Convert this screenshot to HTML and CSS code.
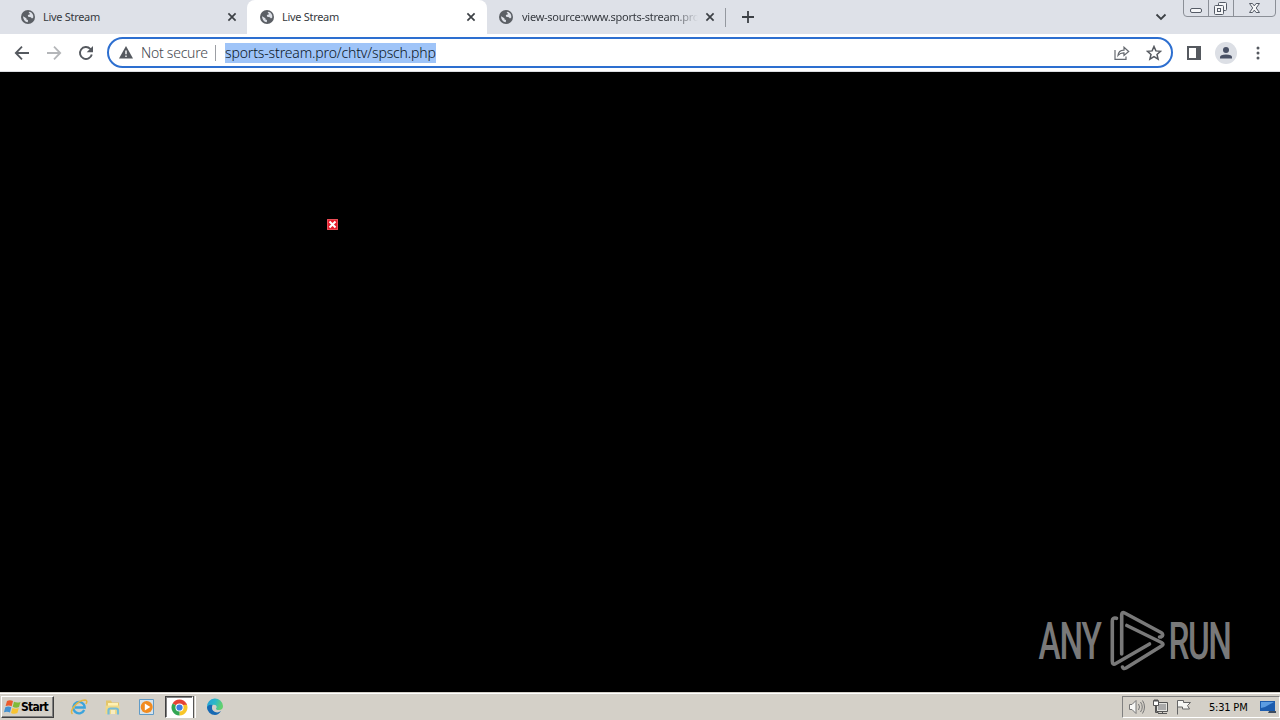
FILE: index.html
```html
<!DOCTYPE html>
<html lang="en">
<head>
<meta charset="utf-8">
<title>Live Stream</title>
<link rel="stylesheet" href="styles.css">
</head>
<body>
<svg class="defs" width="0" height="0">
  <symbol id="globe" viewBox="0 0 14 14"><circle cx="7" cy="7" r="7" fill="#5b5f65"/><path d="M2.100 6.200 5.400 8.300 5.500 9.600 7 10.100 6.800 12.200A5.500 5.500 0 0 1 2.100 6.200ZM8.500 1.800A5.500 5.500 0 0 1 12.300 7.600L11 8.500 9.800 7.200 7.200 6.700 6.800 5 8.700 4.400 8.800 3.300 7.600 3Z" fill="#dee1e8"/></symbol>
  <symbol id="close" viewBox="0 0 10 10"><path d="m1.400 1.400 7.200 7.200m0-7.200L1.400 8.600" stroke="#3c4045" stroke-width="1.700"/></symbol>
</svg>
<header class="tabs">
  <div class="tab"><svg class="globe"><use href="#globe"/></svg><span class="title">Live Stream</span><svg class="close"><use href="#close"/></svg></div>
  <div class="tab active"><svg class="globe"><use href="#globe"/></svg><span class="title">Live Stream</span><svg class="close"><use href="#close"/></svg></div>
  <div class="tab last"><svg class="globe"><use href="#globe"/></svg><span class="title long">view-source:www.sports-stream.pro</span><svg class="close"><use href="#close"/></svg></div>
  <i class="tab-sep"></i>
  <svg class="plus" viewBox="0 0 12 12"><path d="M6 0v12M0 6h12" stroke="#3c4045" stroke-width="1.800"/></svg>
  <svg class="chevron" viewBox="0 0 12 8"><path d="m1.500 1.500 4.500 4.500 4.500-4.500" fill="none" stroke="#3c4045" stroke-width="1.800"/></svg>
  <svg class="winbtns" viewBox="0 0 94 18"><path d="M.5 0v13q0 3.500 3.500 3.500h85q3.500 0 3.500-3.500V0M25.500 0v16M50.500 0v16" fill="none" stroke="#8b8f97"/><g fill="#f5f6f8" stroke="#555b66"><rect x="7.500" y="8.500" width="11" height="4" rx="1.500"/><rect x="35.500" y="2.500" width="8" height="8" rx="1"/><rect x="31.500" y="5.500" width="9" height="9" rx="1"/><rect x="34.500" y="8.500" width="3" height="3"/><path d="M66.500 3.500h3l1.800 2.400 1.800-2.400h3.400l-3.300 4.500 3.300 4.500h-3.400l-1.800-2.400-1.800 2.400h-3l3.200-4.500Z"/></g></svg>
</header>
<nav class="toolbar">
  <svg class="nav back" viewBox="0 0 16 16"><path d="M15 8H2M8 1.700 1.800 8 8 14.300" fill="none" stroke="#55595f" stroke-width="1.800"/></svg>
  <svg class="nav fwd" viewBox="0 0 16 16"><path d="M1 8h13M8 1.700 14.200 8 8 14.300" fill="none" stroke="#b4b6b9" stroke-width="1.800"/></svg>
  <svg class="nav reload" viewBox="0 0 16 16"><path d="M13.800 9.500A6 6 0 1 1 12.300 3.800L14 5.500" fill="none" stroke="#55595f" stroke-width="1.900"/><path d="M15 1v6.300H8.700Z" fill="#55595f"/></svg>
  <div class="omnibox">
    <svg class="warn" viewBox="0 0 14 13"><path d="M7 0 14 12.500H0Z" fill="#55595f"/><path d="M7 4.500v3.700M7 9.400v1.500" stroke="#fff" stroke-width="1.400"/></svg>
    <span class="secure">Not secure</span><i class="omni-sep"></i><span class="url">sports-stream.pro/chtv/spsch.php</span>
    <svg class="share" viewBox="0 0 16 14"><path d="M1 4v9.300h11V10.500M4 9.500C4.300 6 6.500 4.200 10 4.100V1.200L14.700 5.500 10 9.500V6.900C7.300 6.800 5.500 7.600 4 9.500Z" fill="none" stroke="#65696f" stroke-width="1.200"/></svg>
    <svg class="star" viewBox="0 0 16 16"><path d="m8 1.500 1.900 4.400 4.700.4L11 9.500l1.100 4.700L8 11.700l-4.100 2.500L5 9.500 1.400 6.300l4.700-.4Z" fill="none" stroke="#55595f" stroke-width="1.500"/></svg>
  </div>
  <svg class="panel" viewBox="0 0 14 14"><path d="M0 0h14v14H0ZM2 2v10h7V2Z" fill="#55595f" fill-rule="evenodd"/></svg>
  <svg class="avatar" viewBox="0 0 22 22"><circle cx="11" cy="11" r="11" fill="#dcdfe5"/><circle cx="11" cy="8" r="3" fill="#485064"/><path d="M5 16.500v-1.300Q5 12.500 11 12.400q6 .1 6 2.800v1.300Z" fill="#485064"/></svg>
  <svg class="dots" viewBox="0 0 4 14"><g fill="#55595f"><circle cx="2" cy="2" r="1.500"/><circle cx="2" cy="7" r="1.500"/><circle cx="2" cy="12" r="1.500"/></g></svg>
</nav>
<main class="page">
  <svg class="broken" viewBox="0 0 11 11"><path d="M0 0h11v11H0Z" fill="#e51c2b"/><path d="M.5.500h10v10H.5Z" fill="none" stroke="#f29a9c" stroke-opacity=".4"/><path d="m2.500 2.500 6 6m0-6-6 6" stroke="#fff" stroke-width="2"/></svg>
  <svg class="brand" viewBox="0 0 200 70">
    <g class="brand-text"><text transform="translate(7.500 54) scale(.64 1)" textLength="99" lengthAdjust="spacing">ANY</text><text transform="translate(137.500 54) scale(.64 1)" textLength="99" lengthAdjust="spacing">RUN</text></g>
    <g fill="none" stroke="#797979" stroke-width="3.600" stroke-linejoin="round" stroke-linecap="round"><path d="M90.700 49V10q0-3.500 3-2L130 27.500q3.500 2.500 0 4.500h-1.500"/><path d="M85.500 13.300q-4.200-1-4.200 2.700v40q0 4.500 3.500 2.500L118.500 39"/><path d="M95.800 20.500 130.500 37.500q3 1.700 0 3.500L95 63q-2.700 1.500-3.500-1"/></g>
  </svg>
</main>
<footer class="taskbar">
  <button class="start"><svg viewBox="0 0 17 16"><path d="M3 2q3-1.600 6 .1L7.700 7.300Q5 5.800 1.600 7.100Z" fill="#ec5b2c"/><path d="M10 2.700q3 1.500 6.500.2L15 8q-3 1.400-6.300-.2Z" fill="#80ba38"/><path d="M1.300 8.200q3.200-1.200 6 .1L6 13.500Q3.200 12-.1 13.300Z" fill="#4592d1"/><path d="M8.400 8.900q3 1.500 6.400.2l-1.400 5q-3.200 1.400-6.400-.2Z" fill="#f8c331"/></svg><span>Start</span></button>
  <svg class="ql ie" viewBox="0 0 18 18"><path d="M14.200 12A5.700 5.700 0 1 1 14.700 9.500H5" fill="none" stroke="#3ba4dc" stroke-width="2.300"/><path d="M2.500 16C-1 13 7 2.500 15 2q3 .5 1 4" fill="none" stroke="#e4b744" stroke-width="1.500"/></svg>
  <svg class="ql folder" viewBox="0 0 18 18"><path d="M2 2.500h5l1 2h7v11H2Z" fill="#e4c66a"/><path d="M4 5h10v4H4Z" fill="#fff1b2"/><path d="M1.500 7.500h14V16h-14Z" fill="#efd988"/><path d="M4.500 16.500v-4q0-2 2-2h5.500q2 0 2 2v4" fill="none" stroke="#74bcd9" stroke-width="2.200"/><path d="M7 12h4v4H7Z" fill="#f7ecc0"/></svg>
  <svg class="ql media" viewBox="0 0 18 18"><path d="M1.500 1.500h14v15h-14Z" fill="#d6e3ec" stroke="#609bc7"/><circle cx="8.700" cy="9" r="6" fill="#f18b20"/><path d="m6.800 5.500 5.500 3.500-5.500 3.500Z" fill="#fff"/></svg>
  <div class="task"><svg viewBox="0 0 18 18"><path d="M9 9 1.700 4.800A8.400 8.400 0 0 1 16.300 4.800Z" fill="#e54335"/><path d="M9 9 16.300 4.800A8.400 8.400 0 0 1 9 17.400Z" fill="#f8c629"/><path d="M9 9v8.400A8.400 8.400 0 0 1 1.700 4.800Z" fill="#32a653"/><path d="M9 4.800h7.300l.7 1.400H9Z" fill="#e54335"/><circle cx="9" cy="9" r="4.300" fill="#fff"/><circle cx="9" cy="9" r="3.300" fill="#3b7de4"/></svg></div><i class="task-edge"></i>
  <svg class="ql edge" viewBox="0 0 18 18"><defs><linearGradient id="ed" x2="1" y2=".3"><stop stop-color="#249dda"/><stop offset=".55" stop-color="#2bb8c8"/><stop offset="1" stop-color="#62d06e"/></linearGradient></defs><path d="M1 9A8 8 0 0 1 17 8q0 4-4 4-3 0-3-1.500 1-1 .5-2.500Q9 6 6 7 2 8.500 1 12Z" fill="url(#ed)"/><path d="M1 9Q3 6 6.500 7 4.500 12 9 14q3 1.200 6-.9Q12.500 17 9 17A8 8 0 0 1 1 9Z" fill="#1769b3"/></svg>
  <div class="tray">
    <svg class="sound" viewBox="0 0 18 16"><path d="M1.500 5.500H4l4-4v13l-4-4H1.500Z" fill="#f8f8f6" stroke="#777"/><path d="M10.500 5q2 3 0 6m2-8q3.500 5 0 10m2-11.500q4 6.500 0 13" fill="none" stroke="#777"/></svg>
    <svg class="network" viewBox="0 0 18 16"><path d="M4.500 3.500h11v9h-11Z" fill="#e4e4e0" stroke="#555"/><path d="M6 5h8v6H6Z" fill="#aaa"/><path d="M6 14.500h9M10.500 12.500v2M3.500 7v6.500h3" fill="none" stroke="#555"/><path d="M1.500 1.500h5v5h-5ZM3 0v3m2-3v3" fill="#fff" stroke="#555"/></svg>
    <svg class="flag" viewBox="0 0 17 16"><path d="M1.500 15.500v-14h6v2h7l-3 3 2 3.500h-7v-2h-5" fill="#f7f7f4" stroke="#666"/></svg>
    <span class="clock">5:31 PM</span>
    <svg class="desktop" viewBox="0 0 16 14"><path d="M0 1h15v10H0Z" fill="#1c5cae"/><path d="M1 2h13L5 7 1 8Z" fill="#5b9ce2"/><path d="M9 11h7v2H8Z" fill="#3d4b5e"/></svg>
  </div>
</footer>
</body>
</html>
```
FILE: styles.css
```css
* { box-sizing: border-box; }
body { margin: 0; width: 1280px; height: 720px; overflow: hidden; display: flex; flex-direction: column; font-family: "DejaVu Sans Condensed", "DejaVu Sans", sans-serif; background: #000; }
svg { display: block; flex: none; }
.defs { position: absolute; }
.tabs { height: 34px; background: #dee1e8; display: flex; align-items: center; padding-left: 8px; flex: none; }
.tab { width: 239px; height: 34px; display: flex; align-items: center; padding: 0 10px 0 13px; flex: none; }
.tab.active { width: 240px; background: #fff; border-radius: 8px 8px 0 0; padding-right: 11px; }
.tab.last { width: 238px; padding-left: 12px; }
.globe { width: 14px; height: 14px; }
.title { margin-left: 8px; margin-right: auto; width: 176px; flex: none; font-family: "Noto Sans", sans-serif; font-size: 11px; line-height: 16px; letter-spacing: -.3px; white-space: nowrap; overflow: hidden; color: #363a40; }
.title.long { margin-left: 9px; letter-spacing: -.25px; -webkit-mask-image: linear-gradient(90deg, #000 86%, transparent); mask-image: linear-gradient(90deg, #000 86%, transparent); }
.close { width: 10px; height: 10px; }
.tab-sep { width: 1px; height: 19px; background: #94989f; }
.plus { width: 12px; height: 12px; margin-left: 16px; }
.chevron { width: 12px; height: 8px; margin-left: auto; }
.winbtns { width: 94px; height: 18px; margin-left: 16px; margin-right: 3px; align-self: flex-start; }
.toolbar { height: 38px; flex: none; background: #fff; border-bottom: 1px solid #dcdee2; display: flex; align-items: center; padding-left: 14px; }
.nav { width: 16px; height: 16px; margin-right: 16px; }
.reload { margin-right: 13px; }
.omnibox { width: 1066px; height: 31px; border: 2px solid #2d6fd0; border-radius: 16px; display: flex; align-items: center; padding: 0 9px 0 10px; font-family: "Noto Sans", sans-serif; font-size: 14px; font-weight: 300; flex: none; }
.warn { width: 14px; height: 13px; }
.secure { margin-left: 8px; width: 67px; color: #44484e; letter-spacing: -.25px; white-space: nowrap; }
.omni-sep { width: 1px; height: 16px; margin: 0 9px 0 7px; background: #9c9fa4; }
.url { width: 211px; height: 20px; line-height: 20px; background: #9fc4f8; color: #0b1626; letter-spacing: -.14px; white-space: nowrap; }
.share { width: 16px; height: 14px; margin-left: auto; margin-right: 16px; }
.star { width: 16px; height: 16px; }
.panel { width: 14px; height: 14px; margin-left: 14px; }
.avatar { width: 22px; height: 22px; margin-left: 14px; }
.dots { width: 4px; height: 14px; margin-left: 19px; }
.page { height: 620px; flex: none; background: #000; display: flex; justify-content: space-between; align-items: flex-end; padding: 0 49px 17px 327px; }
.broken { width: 11px; height: 11px; align-self: flex-start; margin-top: 147px; }
.brand { width: 200px; height: 70px; }
.brand-text { font-family: Roboto, sans-serif; font-size: 52px; font-weight: 500; fill: #797979; }
.taskbar { height: 28px; flex: none; background: #d4d0c8; border-top: 1px solid #d4d0c8; box-shadow: inset 0 1px #fff; display: flex; align-items: center; padding: 1px 0 0 1px; }
.start { width: 53px; height: 22px; padding: 0 2px; border: 1px solid; border-color: #fff #404040 #404040 #fff; box-shadow: inset -1px -1px #808080; background: #d4d0c8; display: flex; align-items: center; font: bold 12px "DejaVu Sans Condensed", sans-serif; color: #000; }
.start svg { width: 17px; height: 16px; }
.start span { letter-spacing: -.75px; }
.ql { width: 18px; height: 18px; }
.ie { margin-left: 16px; }
.folder { margin-left: 16px; }
.media { margin-left: 16px; }
.task { width: 28px; height: 22px; margin-left: 9px; border: 1px solid; border-color: #404040 #fff #fff #404040; background: #fff; box-shadow: inset 1px 1px #808080; display: flex; align-items: center; justify-content: center; }
.task svg { width: 17px; height: 17px; }
.task-edge { width: 3px; height: 22px; border-left: 1px solid #555; border-right: 1px solid #fff; }
.edge { margin-left: 10px; }
.tray { width: 158px; height: 22px; margin-left: auto; border: 1px solid; border-color: #808080 #fff #fff #808080; display: flex; align-items: center; padding-left: 5px; }
.sound { width: 18px; height: 16px; }
.network { width: 18px; height: 16px; margin-left: 6px; }
.flag { width: 17px; height: 16px; margin-left: 6px; }
.clock { width: 42px; margin-left: 16px; font: 11px "DejaVu Sans Condensed", sans-serif; letter-spacing: -.2px; color: #000; white-space: nowrap; }
.desktop { width: 16px; height: 14px; margin-left: 9px; }
```
